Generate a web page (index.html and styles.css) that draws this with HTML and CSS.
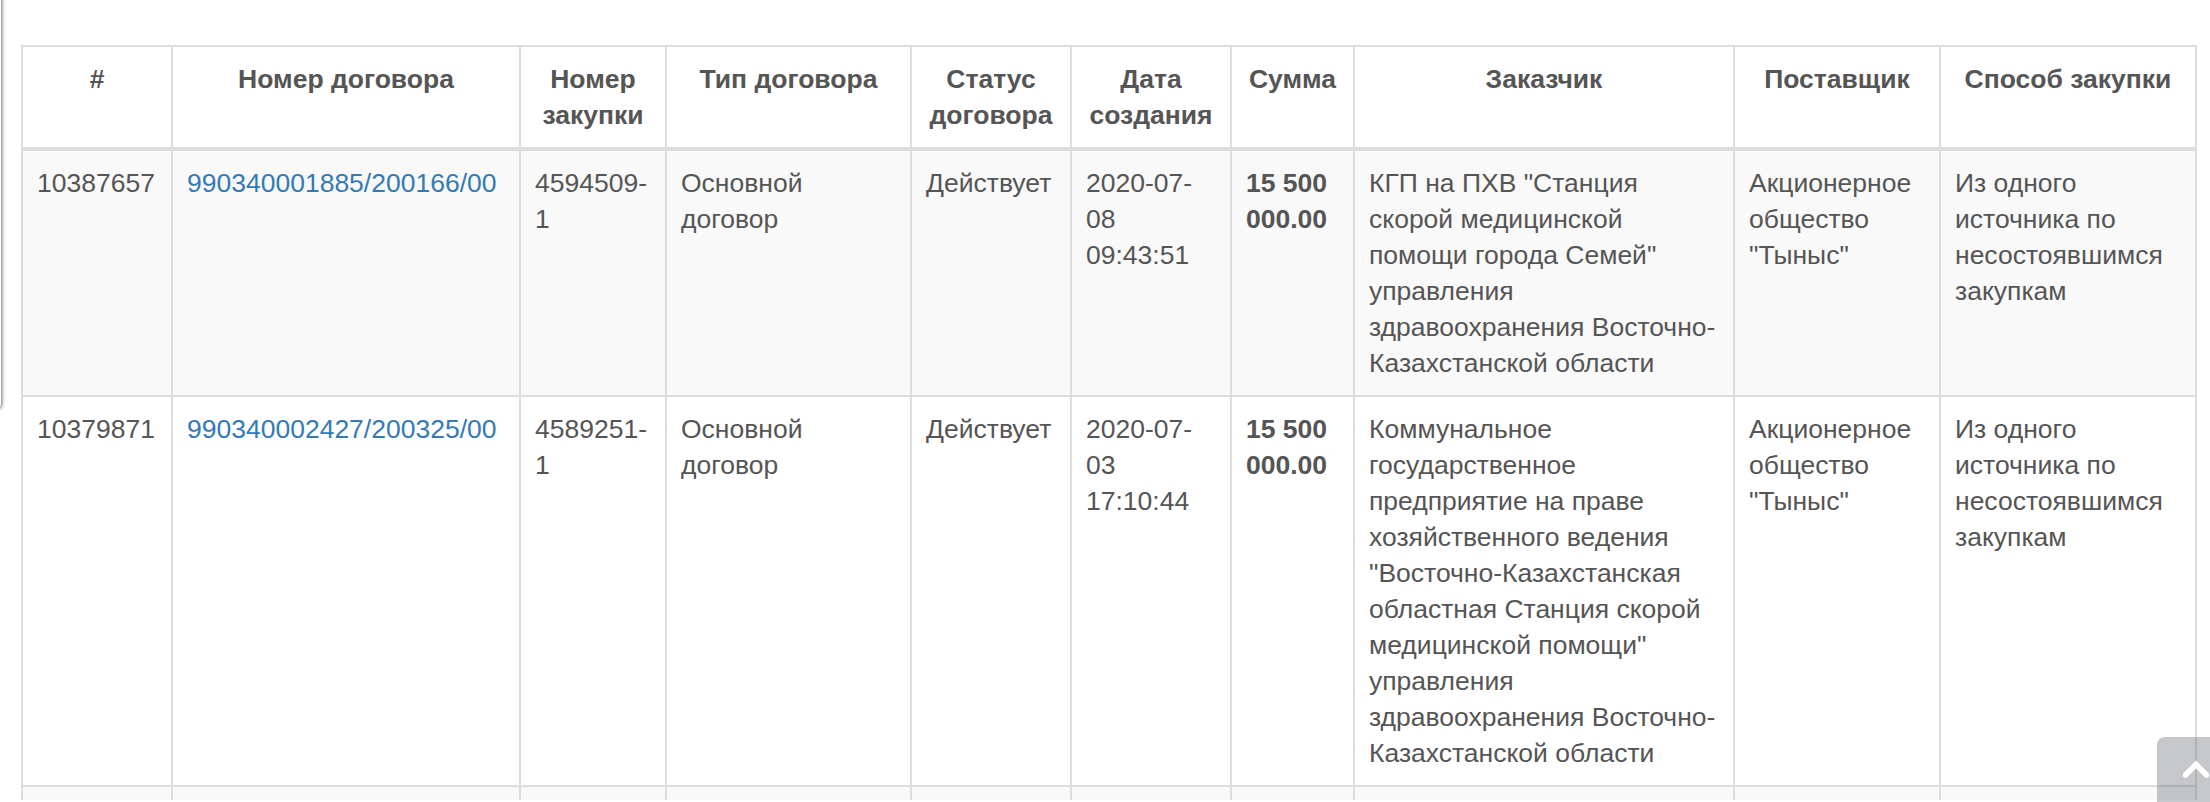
FILE: index.html
```html
<!DOCTYPE html>
<html lang="ru">
<head>
<meta charset="utf-8">
<title>Договоры</title>
<link rel="stylesheet" href="styles.css">
</head>
<body>
<div class="side-panel"></div>
<main class="page">
  <table class="contracts">
    <colgroup>
      <col class="c-num">
      <col class="c-contract">
      <col class="c-purchase">
      <col class="c-type">
      <col class="c-status">
      <col class="c-date">
      <col class="c-sum">
      <col class="c-customer">
      <col class="c-supplier">
      <col class="c-method">
    </colgroup>
    <thead>
      <tr>
        <th>#</th>
        <th>Номер договора</th>
        <th>Номер закупки</th>
        <th>Тип договора</th>
        <th>Статус договора</th>
        <th>Дата создания</th>
        <th>Сумма</th>
        <th>Заказчик</th>
        <th>Поставщик</th>
        <th>Способ закупки</th>
      </tr>
    </thead>
    <tbody>
      <tr class="odd">
        <td>10387657</td>
        <td><a href="#">990340001885/200166/00</a></td>
        <td>4594509-<wbr>1</td>
        <td>Основной договор</td>
        <td>Действует</td>
        <td>2020-07-<wbr>08 09:43:51</td>
        <td class="sum">15 500 000.00</td>
        <td>КГП на ПХВ "Станция скорой медицинской помощи&nbsp;города Семей" управления здравоохранения Восточно-Казахстанской области</td>
        <td>Акционерное общество "Тыныс"</td>
        <td>Из одного источника по несостоявшимся закупкам</td>
      </tr>
      <tr>
        <td>10379871</td>
        <td><a href="#">990340002427/200325/00</a></td>
        <td>4589251-<wbr>1</td>
        <td>Основной договор</td>
        <td>Действует</td>
        <td>2020-07-<wbr>03 17:10:44</td>
        <td class="sum">15 500 000.00</td>
        <td>Коммунальное государственное предприятие на праве хозяйственного ведения "Восточно-Казахстанская областная Станция скорой медицинской помощи" управления здравоохранения Восточно-Казахстанской области</td>
        <td>Акционерное общество "Тыныс"</td>
        <td>Из одного источника по несостоявшимся закупкам</td>
      </tr>
      <tr class="odd filler">
        <td></td><td></td><td></td><td></td><td></td><td></td><td></td><td></td><td></td><td></td>
      </tr>
    </tbody>
  </table>
</main>
<a class="to-top" href="#" aria-label="Наверх">
  <svg class="to-top-icon" width="26" height="18" viewBox="0 0 26 18"><polyline points="2.5,15 13,4.5 23.5,15" fill="none" stroke="#fff" stroke-width="5.5" stroke-linecap="square"/></svg>
</a>
</body>
</html>
```
FILE: styles.css
```css
html, body {
  margin: 0;
  padding: 0;
  height: 802px;
  overflow: hidden;
  background: #fff;
}

body {
  font-family: "Liberation Sans", Arial, Helvetica, sans-serif;
  font-size: 26.5px;
  line-height: 36px;
  color: #555;
  position: relative;
}

.page {
  padding: 45px 0 0 21px;
}

.contracts {
  table-layout: fixed;
  width: 2174px;
  border-collapse: collapse;
  border-spacing: 0;
}

.c-num { width: 150px; }
.c-contract { width: 348px; }
.c-purchase { width: 146px; }
.c-type { width: 245px; }
.c-status { width: 160px; }
.c-date { width: 160px; }
.c-sum { width: 123px; }
.c-customer { width: 380px; }
.c-supplier { width: 206px; }
.c-method { width: 256px; }

.contracts th,
.contracts td {
  border: 2px solid #ddd;
  padding: 14px;
  vertical-align: top;
  text-align: left;
}

.contracts th {
  font-weight: bold;
  text-align: center;
  border-bottom-width: 4px;
  color: #555;
}

.contracts tr.odd td {
  background: #f9f9f9;
}

.contracts .filler td {
  padding: 0;
  height: 13px;
  border-bottom: 0;
}

.contracts a {
  color: #337ab7;
  text-decoration: none;
}

.sum {
  font-weight: bold;
}

.side-panel {
  position: absolute;
  left: -300px;
  top: -10px;
  width: 300px;
  height: 418px;
  border: 1px solid #a9a9a9;
  border-radius: 6px;
  background: #fff;
  box-shadow: 1px 0 3px rgba(0, 0, 0, 0.35);
}

.to-top {
  position: fixed;
  right: -25px;
  bottom: -20px;
  width: 78px;
  height: 85px;
  border-radius: 8px;
  background: rgba(110, 115, 122, 0.4);
  display: flex;
  justify-content: center;
  padding-top: 23px;
  box-sizing: border-box;
}

.to-top-icon {
  display: block;
}
```
